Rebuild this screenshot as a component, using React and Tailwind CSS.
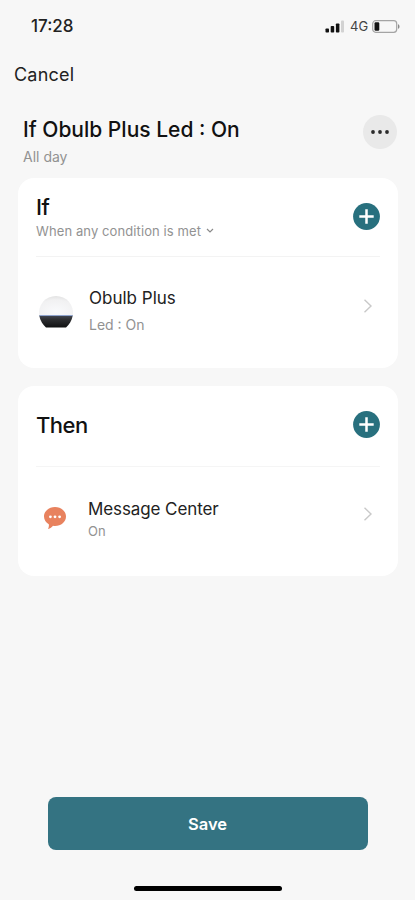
import React from "react";

const AddButton = ({ label }) => (
  <button aria-label={label} className="block h-[27px] w-[27px] shrink-0">
    <svg viewBox="0 0 27 27" className="block h-[27px] w-[27px]">
      <circle cx="13.5" cy="13.5" r="13.4" fill="#28707e" />
      <path d="M13.5 6.3v14.4M6.3 13.5h14.4" stroke="#fff" strokeWidth="2.5" />
    </svg>
  </button>
);

const Chevron = () => (
  <svg viewBox="0 0 10 16" className="h-4 w-2.5" fill="none">
    <path d="M1.5 1.8 8 8l-6.5 6.2" stroke="#c9c9c9" strokeWidth="1.4" />
  </svg>
);

const BulbIcon = () => (
  <svg viewBox="0 0 36 34" className="h-[34px] w-9">
    <defs>
      <radialGradient id="dome" cx="0.5" cy="0.8" r="0.85">
        <stop offset="0" stopColor="#f9fafc" />
        <stop offset="0.7" stopColor="#f1f1f2" />
        <stop offset="1" stopColor="#dedede" />
      </radialGradient>
      <linearGradient id="base" x1="0" y1="0" x2="0" y2="1">
        <stop offset="0" stopColor="#434956" />
        <stop offset="0.3" stopColor="#2f3033" />
        <stop offset="1" stopColor="#101112" />
      </linearGradient>
    </defs>
    <path d="M1.2 20.5A17 17 0 1 1 34.8 20.5z" fill="url(#dome)" />
    <path d="M1.2 20.5C2.2 25.5 4.5 29.5 8 32.5h20c3.5-3 5.8-7 6.8-12z" fill="url(#base)" />
    <path d="M1.3 20.5h33.4" stroke="#8fa3cc" strokeWidth="1" />
  </svg>
);

const MessageIcon = () => (
  <svg viewBox="0 0 24 24" className="h-6 w-6">
    <path
      d="M12 1C5.9 1 1 5.2 1 10.5c0 3.3 1.9 6.1 4.8 7.8.3 1.7 0 3.2-.8 4.7 2.3-.6 3.9-1.7 5-3.2.7.1 1.3.2 2 .2 6.1 0 11-4.2 11-9.5S18.1 1 12 1z"
      fill="#e8825e"
    />
    <circle cx="7.4" cy="10.8" r="1.4" fill="#fff" />
    <circle cx="12" cy="10.8" r="1.4" fill="#fff" />
    <circle cx="16.6" cy="10.8" r="1.4" fill="#fff" />
  </svg>
);

const StatusBar = () => (
  <div className="flex h-[52px] items-center justify-between pl-[31px] pr-[15px]">
    <span className="text-[17px] font-medium leading-5">17:28</span>
    <div className="flex items-center">
      <svg viewBox="0 0 20 13" className="h-[13px] w-5">
        <rect x="0.5" y="8.5" width="3.5" height="4" rx="0.8" fill="#111" />
        <rect x="5.7" y="6" width="3.5" height="6.5" rx="0.8" fill="#111" />
        <rect x="10.9" y="3.5" width="3.5" height="9" rx="0.8" fill="#111" />
        <rect x="16" y="0.5" width="3" height="12" rx="0.8" fill="#d2d2d2" />
      </svg>
      <span className="ml-[5px] w-[22px] text-[13px] leading-5 text-[#444]">4G</span>
      <svg viewBox="0 0 28 13" className="h-[13px] w-7" fill="none">
        <rect x="0.7" y="0.7" width="24" height="11.6" rx="3" stroke="#a4a4a4" strokeWidth="1.2" />
        <rect x="2.5" y="2.2" width="4.8" height="8.6" rx="1.2" fill="#111" />
        <path d="M26 4.2v4.6c1-.3 1.5-1.3 1.5-2.3S27 4.5 26 4.2z" fill="#8a8a8a" />
      </svg>
    </div>
  </div>
);

const App = () => {
  return (
    <div
      className="flex h-[900px] w-full flex-col overflow-hidden bg-[#f7f7f7] text-[#222]"
      style={{ fontFamily: 'Inter, "Liberation Sans", sans-serif' }}
    >
      <StatusBar />

      <div className="flex h-[46px] items-center pl-[14px]">
        <button className="text-[18px] leading-6 tracking-[0.2px]">Cancel</button>
      </div>

      {/* Scene title */}
      <div className="flex h-20 items-start justify-between pl-[23px] pr-[18px] pt-[17px]">
        <div className="pt-px">
          <h1 className="text-[21px] font-medium leading-7 text-[#111]">If Obulb Plus Led : On</h1>
          <p className="mt-px text-[14px] leading-6 text-[#929292]">All day</p>
        </div>
        <button aria-label="More" className="flex h-[34px] w-[34px] items-center justify-center rounded-full bg-[#e9e9e9]">
          <svg viewBox="0 0 18 4" className="h-1 w-[18px]" fill="#2b2b2b">
            <circle cx="2" cy="2" r="1.9" />
            <circle cx="9" cy="2" r="1.9" />
            <circle cx="16" cy="2" r="1.9" />
          </svg>
        </button>
      </div>

      <div className="flex flex-col gap-[18px] pl-[18px] pr-[17px]">
        {/* Conditions */}
        <section className="h-[190px] rounded-2xl bg-white">
          <div className="mx-[18px] flex h-[79px] items-start justify-between border-b border-[#f3f3f3] pt-[15px]">
            <div>
              <h2 className="text-[22px] font-medium leading-7 tracking-[-0.5px] text-[#111]">If</h2>
              <button className="mt-px flex items-center text-[13px] leading-[18px] tracking-[0.1px] text-[#929292]">
                When any condition is met
                <svg viewBox="0 0 8 6" className="ml-[5px] h-1.5 w-2" fill="none">
                  <path d="m1 1 3 3 3-3" stroke="#8a8a8a" strokeWidth="1.2" />
                </svg>
              </button>
            </div>
            <div className="pt-2.5">
              <AddButton label="Add condition" />
            </div>
          </div>
          <div className="flex items-start pl-5 pr-[25px] pt-[29px]">
            <div className="mt-[9px] w-[51px]">
              <BulbIcon />
            </div>
            <div className="flex-1">
              <p className="text-[17px] leading-6">Obulb Plus</p>
              <p className="mt-[3px] text-[14px] leading-6 text-[#929292]">Led : On</p>
            </div>
            <div className="mt-3">
              <Chevron />
            </div>
          </div>
        </section>

        {/* Actions */}
        <section className="h-[190px] rounded-2xl bg-white">
          <div className="mx-[18px] flex h-[81px] items-start justify-between border-b border-[#f5f5f5] pt-[25px]">
            <h2 className="text-[22px] font-medium leading-7 tracking-[-0.5px] text-[#111]">Then</h2>
            <AddButton label="Add action" />
          </div>
          <div className="flex items-start pl-[25px] pr-[25px] pt-[30px]">
            <div className="mt-[9px] w-[45px]">
              <MessageIcon />
            </div>
            <div className="flex-1">
              <p className="text-[17px] leading-6 tracking-[-0.1px]">Message Center</p>
              <p className="text-[13px] leading-[21px] text-[#929292]">On</p>
            </div>
            <div className="mt-[9px]">
              <Chevron />
            </div>
          </div>
        </section>
      </div>

      <div className="mt-auto flex flex-col items-center pb-[9px]">
        <button className="h-[53px] w-80 rounded-lg bg-[#347382] pt-0.5 text-[16.5px] font-semibold text-white">Save</button>
        <div className="mt-9 h-[5px] w-[148px] rounded-full bg-black" />
      </div>
    </div>
  );
};

export default App;
